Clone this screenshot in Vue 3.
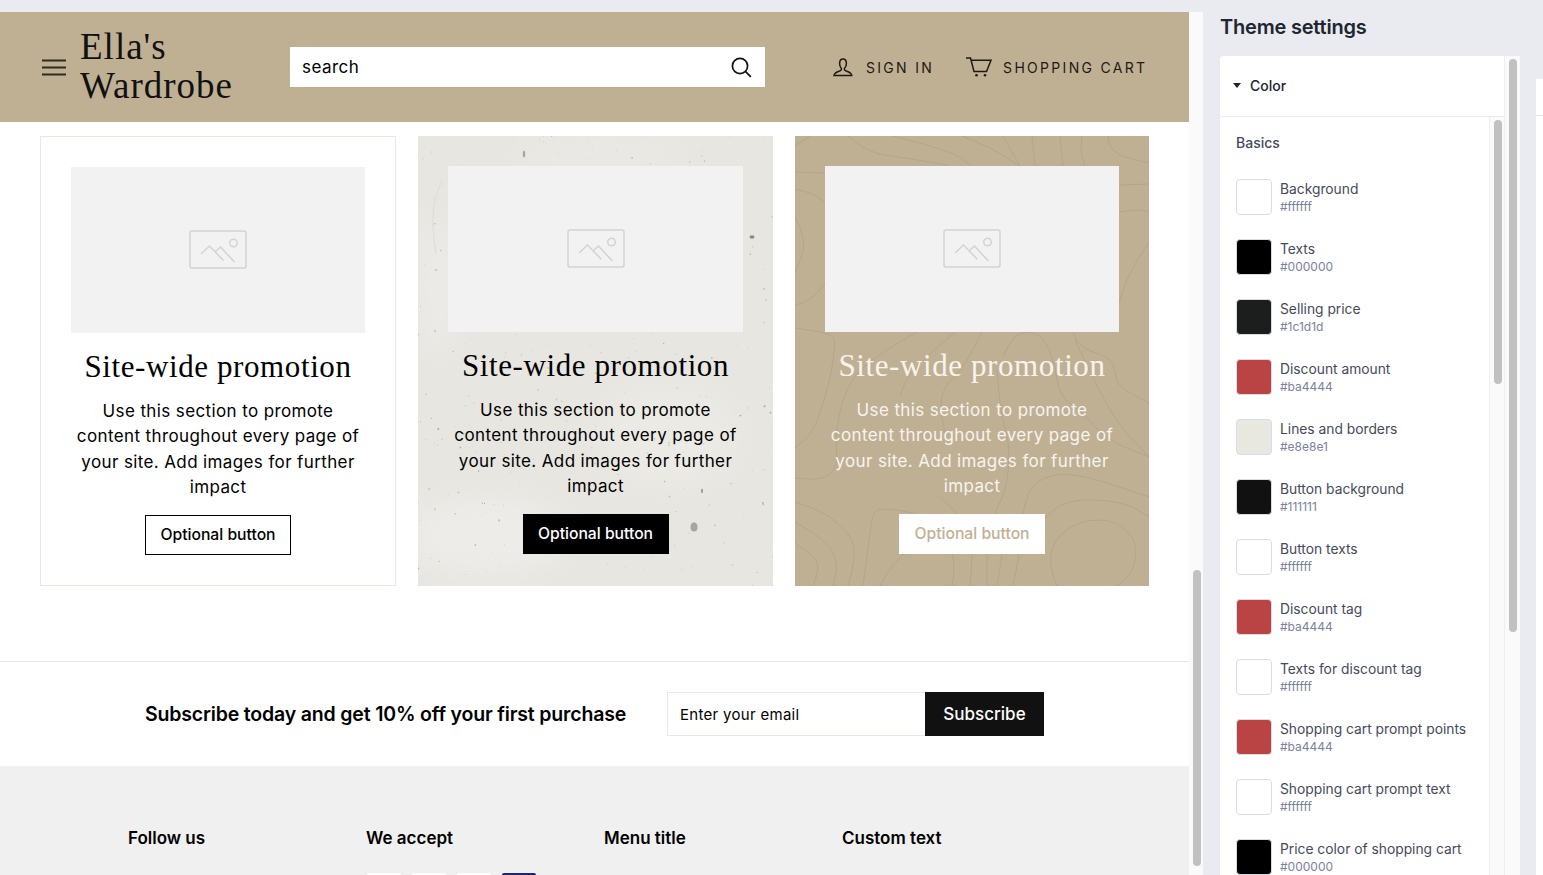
<script setup>
const promos = [
  { id: 1, kind: 'plain' },
  { id: 2, kind: 'stone' },
  { id: 3, kind: 'sand' }
]

const footerTitles = ['Follow us', 'We accept', 'Menu title', 'Custom text']
const payCards = ['#ffffff', '#ffffff', '#ffffff', '#20246f']

const colors = [
  { name: 'Background', hex: '#ffffff' },
  { name: 'Texts', hex: '#000000' },
  { name: 'Selling price', hex: '#1c1d1d' },
  { name: 'Discount amount', hex: '#ba4444' },
  { name: 'Lines and borders', hex: '#e8e8e1' },
  { name: 'Button background', hex: '#111111' },
  { name: 'Button texts', hex: '#ffffff' },
  { name: 'Discount tag', hex: '#ba4444' },
  { name: 'Texts for discount tag', hex: '#ffffff' },
  { name: 'Shopping cart prompt points', hex: '#ba4444' },
  { name: 'Shopping cart prompt text', hex: '#ffffff' },
  { name: 'Price color of shopping cart', hex: '#000000' }
]

// speckles for the stone card, fixed seed so the picture stays the same
let seed = 29
function rnd() {
  seed = (seed * 16807) % 2147483647
  return seed / 2147483647
}
const specks = []
for (let i = 0; i < 340; i++) {
  specks.push({
    x: Math.round(rnd() * 3550) / 10,
    y: Math.round(rnd() * 4500) / 10,
    r: Math.round((0.35 + rnd() * rnd() * 0.8) * 100) / 100,
    o: Math.round((0.25 + rnd() * 0.45) * 100) / 100
  })
}

// contour lines of the sand card, as points read off the reference
const contourPoints = [
  [[0, 10], [15, 0]],
  [[53, 0], [72, 17], [112, 22], [152, 29]],
  [[98, 0], [155, 14], [178, 31]],
  [[167, 0], [195, 11], [225, 30]],
  [[208, 0], [225, 30]],
  [[237, 0], [240, 30]],
  [[265, 0], [268, 30]],
  [[287, 0], [285, 14], [290, 30]],
  [[313, 0], [313, 17], [354, 27]],
  [[0, 36], [30, 37]],
  [[0, 53], [18, 57], [30, 66]],
  [[0, 81], [13, 104], [0, 137]],
  [[324, 49], [354, 48]],
  [[324, 76], [342, 73], [354, 76]],
  [[354, 106], [335, 134], [324, 167]],
  [[0, 169], [15, 166], [30, 147]],
  [[0, 192], [38, 197], [40, 207], [37, 234], [30, 262], [18, 297], [0, 312]],
  [[122, 196], [72, 224], [48, 257], [40, 304], [43, 331], [28, 344], [0, 342]],
  [[160, 196], [115, 234], [105, 260]],
  [[187, 196], [168, 234], [148, 251], [145, 277], [152, 304]],
  [[208, 221], [218, 196], [245, 196], [258, 221], [265, 261], [285, 274], [312, 304], [354, 321]],
  [[278, 196], [282, 211], [315, 221], [320, 234], [322, 250], [354, 267]],
  [[280, 204], [302, 251], [325, 291], [354, 321]],
  [[202, 234], [205, 277], [215, 307], [212, 354], [192, 391], [192, 450]],
  [[0, 366], [28, 374], [58, 401], [60, 424], [53, 450]],
  [[0, 386], [32, 404], [43, 427], [38, 450]],
  [[0, 407], [22, 421], [23, 437], [18, 450]],
  [[68, 450], [75, 397], [78, 377], [85, 372], [125, 377], [155, 407], [160, 431], [157, 450]],
  [[85, 450], [98, 424], [135, 401]],
  [[145, 361], [172, 384], [178, 417], [175, 450]],
  [[218, 450], [225, 417], [228, 371], [238, 347], [262, 337], [295, 341], [354, 361]],
  [[225, 417], [252, 374], [285, 362], [332, 367], [354, 381]],
  [[262, 450], [254, 431], [258, 404], [285, 384], [322, 384], [343, 407], [338, 437], [322, 450]],
  [[202, 450], [207, 417], [215, 380]]
]

function smoothPath(points) {
  let d = 'M' + points[0].join(' ')
  for (let i = 1; i < points.length - 1; i++) {
    const midX = (points[i][0] + points[i + 1][0]) / 2
    const midY = (points[i][1] + points[i + 1][1]) / 2
    d += 'Q' + points[i].join(' ') + ' ' + midX + ' ' + midY
  }
  return d + 'L' + points[points.length - 1].join(' ')
}

const contours = contourPoints.map(smoothPath)
</script>

<template>
  <div class="screen">
    <div class="shopArea">
      <div class="shop">
        <header class="siteHeader">
          <svg class="burger" width="24" height="17" viewBox="0 0 24 17">
            <path d="M0 1.5h24M0 8.5h24M0 15.5h24" stroke="#2c2a22" stroke-width="1.8" fill="none" />
          </svg>
          <div class="logo">Ella's Wardrobe</div>
          <div class="search">
            <span>search</span>
            <svg width="21" height="21" viewBox="0 0 21 21" fill="none" stroke="#111" stroke-width="1.7">
              <circle cx="9" cy="9" r="7.6" />
              <path d="M14.6 14.6l5.2 5.2" />
            </svg>
          </div>
          <div class="navLink signIn">
            <svg width="20" height="19" viewBox="0 0 20 19" fill="none" stroke="#1c1a14" stroke-width="1.5">
              <path d="M6.6 5.6C6.6 3 8 1 10 1s3.4 2 3.4 4.6c0 2-1 3.8-1.8 4.6-.4.5-.3 1.600.4 2.100 1.600 1.100 4.500 1.700 5.800 3.100.7.800.9 1.500 1 2.100H1c.1-.6.300-1.300 1-2.100 1.300-1.400 4.200-2 5.800-3.100.7-.5.8-1.600.4-2.100-.8-.8-1.600-2.600-1.600-4.600z" />
            </svg>
            <span>SIGN IN</span>
          </div>
          <div class="navLink cart">
            <svg width="26" height="20" viewBox="0 0 26 20" fill="none" stroke="#1c1a14" stroke-width="1.5">
              <path d="M0 1h4.500l3.500 13.500h12.500L25 3.200H5.300" />
              <circle cx="10.500" cy="18.300" r="1.300" fill="#1c1a14" stroke="none" />
              <circle cx="19" cy="18.300" r="1.300" fill="#1c1a14" stroke="none" />
            </svg>
            <span>SHOPPING CART</span>
          </div>
        </header>

        <section class="promoGrid">
          <div v-for="promo in promos" :key="promo.id" class="promo" :class="promo.kind">
            <svg v-if="promo.kind === 'stone'" class="texture" viewBox="0 0 355 450" preserveAspectRatio="none">
              <defs>
                <filter id="soft"><feGaussianBlur stdDeviation="14" /></filter>
              </defs>
              <g filter="url(#soft)">
                <ellipse cx="70" cy="400" rx="80" ry="40" fill="#edecE8" />
                <ellipse cx="250" cy="300" rx="70" ry="50" fill="#ebeae5" />
                <ellipse cx="180" cy="20" rx="90" ry="16" fill="#ebe9e5" />
                <ellipse cx="20" cy="150" rx="18" ry="70" fill="#ecebe7" />
              </g>
              <circle v-for="(s, i) in specks" :key="i" :cx="s.x" :cy="s.y" :r="s.r" fill="#8f8a7e" :opacity="s.o" />
              <ellipse cx="276" cy="391" rx="3.500" ry="4.500" fill="#a8a59c" />
              <ellipse cx="106" cy="18" rx="1.200" ry="3.500" fill="#a8a59c" />
              <ellipse cx="334" cy="101" rx="2.500" ry="1.800" fill="#8f8a7e" />
              <ellipse cx="284" cy="355" rx="1" ry="2.200" fill="#9c998f" />
              <path d="M24 45C12 70 14 90 18 118" fill="none" stroke="#dedcd5" stroke-width="1" />
            </svg>
            <svg v-if="promo.kind === 'sand'" class="texture" viewBox="0 0 354 450" preserveAspectRatio="none" fill="none" stroke="#b0a287" stroke-width="0.8">
              <path v-for="(d, i) in contours" :key="i" :d="d" />
            </svg>
            <div class="promoImage">
              <svg width="58" height="39" viewBox="0 0 58 39" fill="none" stroke="#d3d3d3" stroke-width="1.500">
                <rect x="1" y="1" width="56" height="37" rx="2" />
                <circle cx="44.500" cy="13" r="3.800" />
                <path d="M12 24l8.500-8 14 14.500M26 22l5.500-5 14 15" />
              </svg>
            </div>
            <h2>Site-wide promotion</h2>
            <p>Use this section to promote content throughout every page of your site. Add images for further impact</p>
            <button type="button" class="promoBtn">Optional button</button>
          </div>
        </section>

        <section class="subscribe">
          <h3>Subscribe today and get 10% off your first purchase</h3>
          <div class="subscribeForm">
            <div class="emailBox">Enter your email</div>
            <button type="button" class="subscribeBtn">Subscribe</button>
          </div>
        </section>

        <footer class="siteFooter">
          <div v-for="(title, i) in footerTitles" :key="title" class="footerCol">
            <h4>{{ title }}</h4>
            <div v-if="i === 1" class="payments">
              <span v-for="(c, j) in payCards" :key="j" class="payCard" :style="{ background: c }"></span>
            </div>
          </div>
        </footer>
      </div>
      <div class="pageTrack"><div class="pageThumb"></div></div>
    </div>

    <aside class="settings">
      <h1>Theme settings</h1>
      <div class="settingsCard">
        <div class="settingsMain">
          <div class="groupHead">
            <svg width="8" height="5" viewBox="0 0 8 5"><path d="M0 0h8L4 5z" fill="#202532" /></svg>
            <span>Color</span>
          </div>
          <div class="groupBody">
            <div class="colorList">
              <div class="basics">Basics</div>
              <div v-for="c in colors" :key="c.name" class="colorRow">
                <span class="swatch" :style="{ background: c.hex }"></span>
                <div class="colorText">
                  <div class="colorName">{{ c.name }}</div>
                  <div class="colorHex">{{ c.hex }}</div>
                </div>
              </div>
            </div>
            <div class="innerTrack"><div class="innerThumb"></div></div>
          </div>
        </div>
        <div class="outerTrack"><div class="outerThumb"></div></div>
      </div>
    </aside>

    <div class="sliver">
      <div class="sliverTab"></div>
      <div class="sliverLine"></div>
    </div>
  </div>
</template>

<style>
html, body {
  margin: 0;
  overflow: hidden;
  background: #e9ebf0;
}
</style>

<style scoped>
.screen {
  display: flex;
  width: 1543px;
  height: 875px;
  overflow: hidden;
  background: #e9ebf0;
  font-family: Inter, "Liberation Sans", sans-serif;
}

.shopArea {
  display: flex;
  flex: none;
  width: 1203px;
  height: 863px;
  margin-top: 12px;
}

.shop {
  flex: none;
  width: 1189px;
  height: 863px;
  overflow: hidden;
  background: #fff;
  color: #000;
}

.pageTrack {
  flex: none;
  width: 14px;
  padding: 558px 2px 0 4px;
  box-sizing: border-box;
  background: #fafafa;
}

.pageThumb {
  width: 8px;
  height: 296px;
  border-radius: 4px;
  background: #c1c1c1;
}

.siteHeader {
  display: flex;
  align-items: center;
  height: 110px;
  padding-left: 42px;
  background: #bfb094;
}

.burger {
  flex: none;
}

.logo {
  flex: none;
  width: 160px;
  margin: 0 50px 0 14px;
  padding-bottom: 2px;
  font-family: "Liberation Serif", serif;
  font-size: 37px;
  line-height: 39px;
  letter-spacing: 1px;
  color: #111;
}

.search {
  display: flex;
  flex: none;
  align-items: center;
  justify-content: space-between;
  width: 475px;
  height: 40px;
  padding: 0 13px 0 12px;
  box-sizing: border-box;
  background: #fff;
  font-size: 17px;
  letter-spacing: 0.45px;
}

.navLink {
  display: flex;
  flex: none;
  align-items: center;
  font-size: 14px;
  letter-spacing: 2.3px;
  color: #1c1a14;
}

.signIn {
  gap: 13px;
  margin-left: 68px;
}

.cart {
  gap: 11px;
  margin-left: 32px;
}

.promoGrid {
  display: grid;
  grid-template-columns: 356px 355px 354px;
  gap: 22px;
  padding: 14px 0 0 40px;
}

.promo {
  position: relative;
  display: flex;
  flex-direction: column;
  align-items: center;
  height: 450px;
  padding: 30px;
  box-sizing: border-box;
  overflow: hidden;
  text-align: center;
}

.promo > *:not(.texture) {
  position: relative;
}

.plain {
  border: 1px solid #e8e8e1;
}

.stone {
  background: #e8e6e1;
}

.sand {
  background: #bfb094;
  color: #f7f4ee;
}

.texture {
  position: absolute;
  top: 0;
  left: 0;
  width: 100%;
  height: 100%;
}

.promoImage {
  display: flex;
  flex: none;
  align-items: center;
  justify-content: center;
  width: 100%;
  height: 166px;
  padding-bottom: 2px;
  box-sizing: border-box;
  background: #f2f2f2;
}

.promo h2 {
  margin: 16px 0 0;
  font-family: "Liberation Serif", serif;
  font-size: 31px;
  font-weight: 400;
  line-height: 36px;
  letter-spacing: 0.6px;
  white-space: nowrap;
}

.promo p {
  width: 295px;
  margin: 14px 0 0;
  font-size: 17px;
  line-height: 25.4px;
  letter-spacing: 0.38px;
}

.promoBtn {
  flex: none;
  width: 146px;
  height: 40px;
  margin-top: 14px;
  padding: 0;
  border: 1px solid #000;
  background: transparent;
  color: #000;
  font-family: inherit;
  font-size: 15.7px;
  font-weight: 500;
  line-height: 1;
}

.stone .promoBtn {
  background: #000;
  color: #fff;
}

.sand .promoBtn {
  border-color: #fff;
  background: #fff;
  color: #bfb094;
}

.subscribe {
  display: flex;
  align-items: center;
  height: 105px;
  margin-top: 75px;
  padding-left: 145px;
  box-sizing: border-box;
  border-top: 1px solid #e8e8e1;
}

.subscribe h3 {
  flex: none;
  width: 522px;
  margin: 0;
  font-size: 19.5px;
  font-weight: 600;
  letter-spacing: -0.17px;
}

.subscribeForm {
  display: flex;
  flex: none;
  height: 44px;
}

.emailBox {
  display: flex;
  align-items: center;
  width: 258px;
  padding-left: 12px;
  box-sizing: border-box;
  border: 1px solid #e8e8e1;
  border-right: none;
  font-size: 15px;
  letter-spacing: 0.3px;
}

.subscribeBtn {
  width: 119px;
  border: none;
  background: #111;
  color: #fff;
  font-family: inherit;
  font-size: 17px;
  font-weight: 500;
}

.siteFooter {
  display: grid;
  grid-template-columns: repeat(4, 238px);
  height: 110px;
  padding: 61px 0 0 128px;
  background: #f0f0f0;
}

.footerCol h4 {
  margin: 0;
  font-size: 17px;
  font-weight: 600;
  line-height: 22px;
}

.payments {
  display: flex;
  gap: 11px;
  margin-top: 24px;
  padding-left: 1px;
}

.payCard {
  width: 34px;
  height: 22px;
  border-radius: 2px;
}

.settings {
  flex: none;
  width: 333px;
  padding-left: 17px;
  box-sizing: border-box;
}

.settings h1 {
  margin: 0;
  padding-top: 14px;
  font-size: 20px;
  font-weight: 600;
  line-height: 26px;
  letter-spacing: -0.2px;
  color: #202532;
}

.settingsCard {
  display: flex;
  width: 300px;
  margin-top: 16px;
  height: 819px;
  overflow: hidden;
  border-radius: 4px 0 0 0;
  background: #fafafa;
}

.settingsMain {
  flex: none;
  width: 285px;
  border-right: 1px solid #eceef2;
  box-sizing: border-box;
  background: #fff;
}

.groupHead {
  display: flex;
  align-items: center;
  gap: 9px;
  height: 61px;
  padding: 0 0 1px 13px;
  box-sizing: border-box;
  border-bottom: 1px solid #e9ebf0;
  font-size: 14px;
  font-weight: 500;
  color: #202532;
}

.groupBody {
  display: flex;
}

.colorList {
  flex: none;
  width: 270px;
  padding-left: 16px;
  box-sizing: border-box;
  border-right: 1px solid #eceef2;
}

.basics {
  height: 50px;
  padding-top: 17px;
  box-sizing: border-box;
  font-size: 14px;
  font-weight: 500;
  line-height: 17px;
  color: #444a59;
}

.colorRow {
  display: flex;
  align-items: center;
  gap: 8px;
  height: 60px;
}

.swatch {
  flex: none;
  width: 36px;
  height: 36px;
  box-sizing: border-box;
  border: 1px solid #d8dce8;
  border-radius: 4px;
}

.colorName {
  font-size: 13.8px;
  line-height: 20px;
  color: #444a59;
}

.colorHex {
  font-size: 12px;
  line-height: 16px;
  color: #7a8299;
}

.innerTrack {
  flex: none;
  width: 14px;
  padding: 3px 2px 0 4px;
  box-sizing: border-box;
  background: #fafafa;
}

.innerThumb {
  width: 8px;
  height: 264px;
  border-radius: 4px;
  background: #c1c1c1;
}

.outerTrack {
  flex: none;
  width: 15px;
  padding: 3px 2px 0 4px;
  box-sizing: border-box;
}

.outerThumb {
  width: 8px;
  height: 573px;
  border-radius: 4px;
  background: #c1c1c1;
}

.sliver {
  flex: none;
  width: 7px;
  height: 838px;
  margin-top: 37px;
  background: #fff;
}

.sliverTab {
  height: 42px;
  background: #e9ebf0;
}

.sliverLine {
  height: 1px;
  margin-top: 36px;
  background: #e0e0e0;
}
</style>
